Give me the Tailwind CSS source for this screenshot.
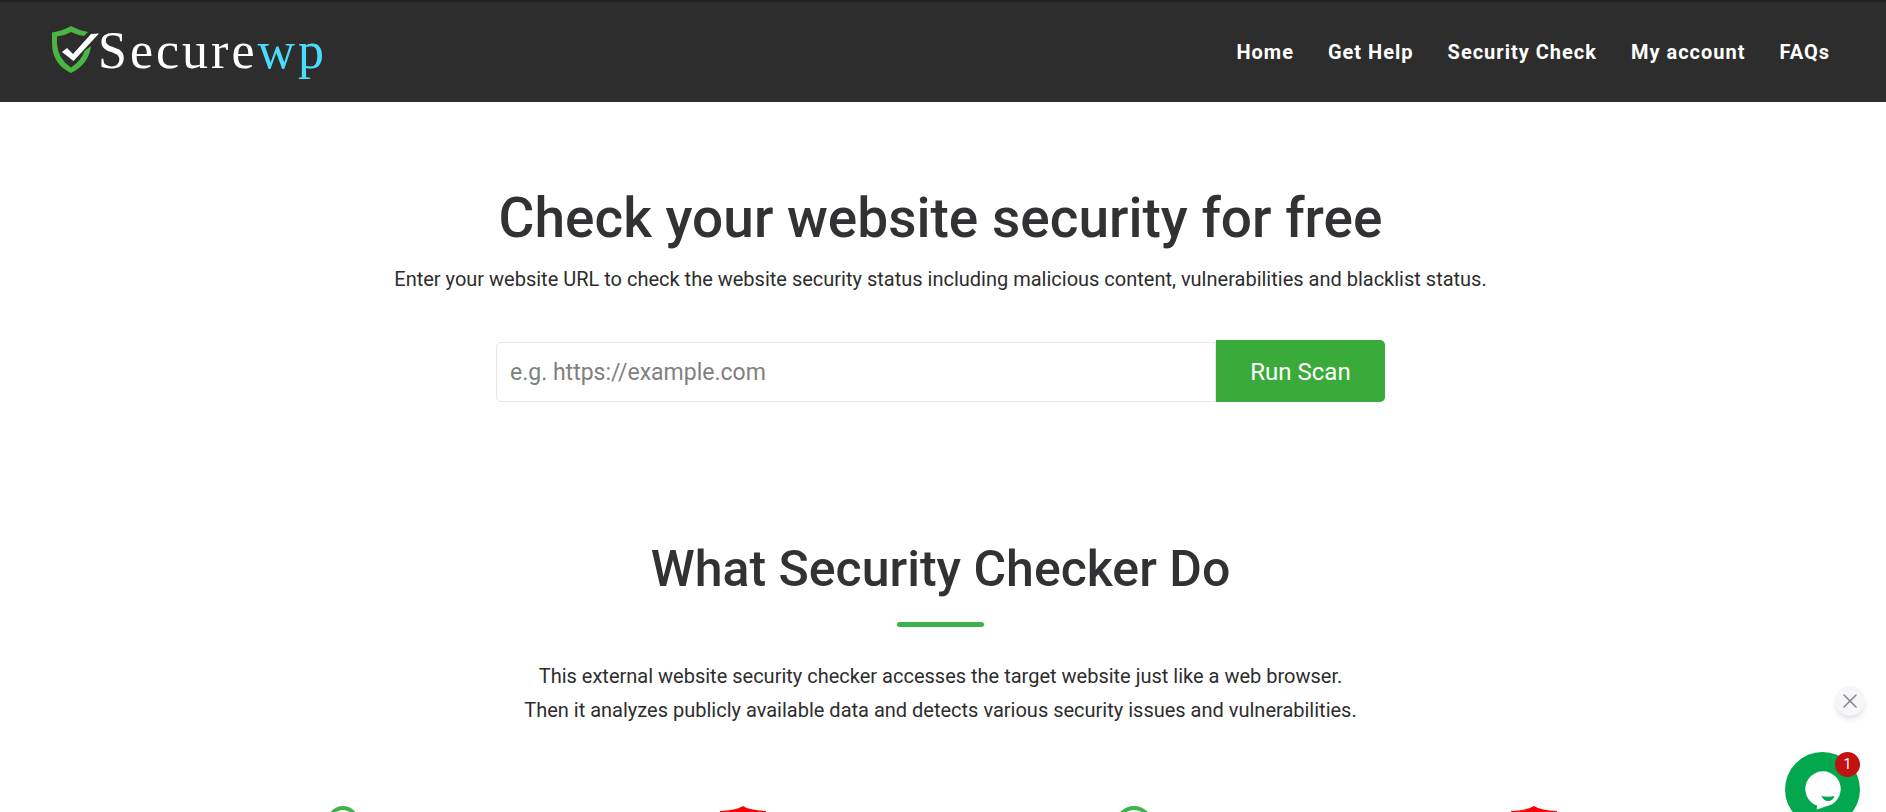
<!DOCTYPE html>
<html lang="en">

<head>
  <meta charset="UTF-8" />
  <meta name="viewport" content="width=device-width, initial-scale=1" />
  <title>Securewp - Security Check</title>
  <script src="https://cdn.jsdelivr.net/npm/@tailwindcss/browser@4"></script>
</head>

<body class="h-screen overflow-hidden bg-white text-[#2d2d2d] font-['Roboto',sans-serif] text-xl">
  <header class="bg-[#2d2d2d] border-t-2 border-t-[#1d2327] h-[102px] pl-[50px] pr-14 flex items-center justify-between">
    <a href="#" class="flex items-center pb-1" aria-label="Securewp">
      <svg class="w-12 h-12 overflow-visible" viewBox="0 0 48 48" xmlns="http://www.w3.org/2000/svg">
        <path d="M2 6.500Q12 5 21 0Q29 4.500 38 6L34 10Q27 9 21 6Q14 10 7 10.500V18Q8 33 21 41.500Q31 35 34.500 25L41 20Q39 38 21 47Q2 38 2 17Z" fill="#4bb543" />
        <path d="M12 26 17 22 23 28 41 8 49 7.500 23.500 35Z" fill="#fff" />
      </svg>
      <span class="pt-0.5 text-white text-[52px] leading-[50px] tracking-[3px] font-['Liberation_Serif',serif]">Secure<span class="text-[#4adcfa]">wp</span></span>
    </a>
    <nav class="flex flex-wrap gap-[34px] text-white font-bold tracking-[1px]">
      <a href="#">Home</a>
      <a href="#">Get Help</a>
      <a href="#">Security Check</a>
      <a href="#">My account</a>
      <a href="#">FAQs</a>
    </nav>
  </header>

  <main class="pr-[5px]">
    <section class="pt-20 text-center">
      <h1 class="text-[55px] leading-[72px] font-medium text-[#323235]">Check your website security for free</h1>
      <p class="mt-2 leading-[34px]">Enter your website URL to check the website security status including malicious content, vulnerabilities and blacklist status.</p>
      <form class="mt-11 mx-auto max-w-[889px] flex items-end text-2xl">
        <input id="url" type="url" aria-label="Website URL" placeholder="e.g. https://example.com"
          class="flex-1 min-w-0 h-[60px] px-[13px] text-[23px] border border-[#eee0e2] rounded-l-[5px] placeholder-[#808080]">
        <button type="submit" class="h-[62px] w-[169px] pt-0.5 bg-[#3aaa3a] text-white rounded-r-[5px] cursor-pointer">Run Scan</button>
      </form>
    </section>

    <section class="pt-32 text-center">
      <h2 class="text-[50px] leading-[78px] font-medium text-[#323235]">What Security Checker Do</h2>
      <div class="mt-[14px] mx-auto w-[87px] h-[5px] rounded-full bg-[#3cb04a]"></div>
      <p class="mt-8 leading-[34px]">
        This external website security checker accesses the target website just like a web browser.<br>
        Then it analyzes publicly available data and detects various security issues and vulnerabilities.
      </p>

      <!-- feature icons -->
      <div class="mt-[79px] mx-auto max-w-[1582px] grid grid-cols-4 justify-items-center">
        <svg class="w-[60px] h-[60px]" viewBox="0 0 60 60" fill="none" stroke="#3cb54a" stroke-width="4" xmlns="http://www.w3.org/2000/svg">
          <circle cx="26" cy="16" r="14" />
          <path d="M36 28 55 52" />
        </svg>
        <svg class="w-[60px] h-[60px]" viewBox="0 0 60 60" fill="#f00" xmlns="http://www.w3.org/2000/svg">
          <path d="M30 0Q37 4.500 53 5V30Q50 48 30 60Q10 48 7 30V5Q23 4.500 30 0Z" />
        </svg>
        <svg class="w-[60px] h-[60px]" viewBox="0 0 60 60" fill="none" stroke="#3cb54a" stroke-width="4" xmlns="http://www.w3.org/2000/svg">
          <circle cx="26" cy="19" r="17" />
          <path d="M37 31 55 52" />
        </svg>
        <svg class="w-[60px] h-[60px]" viewBox="0 0 60 60" fill="#f00" xmlns="http://www.w3.org/2000/svg">
          <path d="M30 0Q37 4.500 53 5V30Q50 48 30 60Q10 48 7 30V5Q23 4.500 30 0Z" />
        </svg>
      </div>
    </section>
  </main>

  <!-- chat widget -->
  <button type="button" aria-label="Close chat"
    class="fixed bottom-24 right-[21px] w-[30px] h-[30px] grid place-items-center rounded-full bg-[#f6f6f9] shadow-md cursor-pointer">
    <svg class="w-[14px] h-[14px]" viewBox="0 0 14 14" fill="none" stroke="#84848f" stroke-width="1.500" stroke-linecap="round" xmlns="http://www.w3.org/2000/svg">
      <path d="M1 1 13 13M13 1 1 13" />
    </svg>
  </button>
  <button type="button" aria-label="Open chat"
    class="fixed -bottom-[15px] right-[26px] w-[75px] h-[75px] rounded-full bg-[#03a84e] cursor-pointer">
    <svg class="w-full h-full" viewBox="0 0 75 75" xmlns="http://www.w3.org/2000/svg">
      <circle cx="38" cy="37" r="17.700" fill="#fff" />
      <path d="M32.500 50 31.700 57.500Q44 54 51 48Z" fill="#fff" />
      <path d="M36.500 44Q43 45.500 49.500 44Q48 49 43 49Q38.500 49 36.500 44Z" fill="#03a84e" />
    </svg>
    <span class="absolute top-0 right-0 w-[25px] h-[25px] rounded-full bg-[#c11111] text-white text-sm leading-[25px]">1</span>
  </button>
</body>

</html>
